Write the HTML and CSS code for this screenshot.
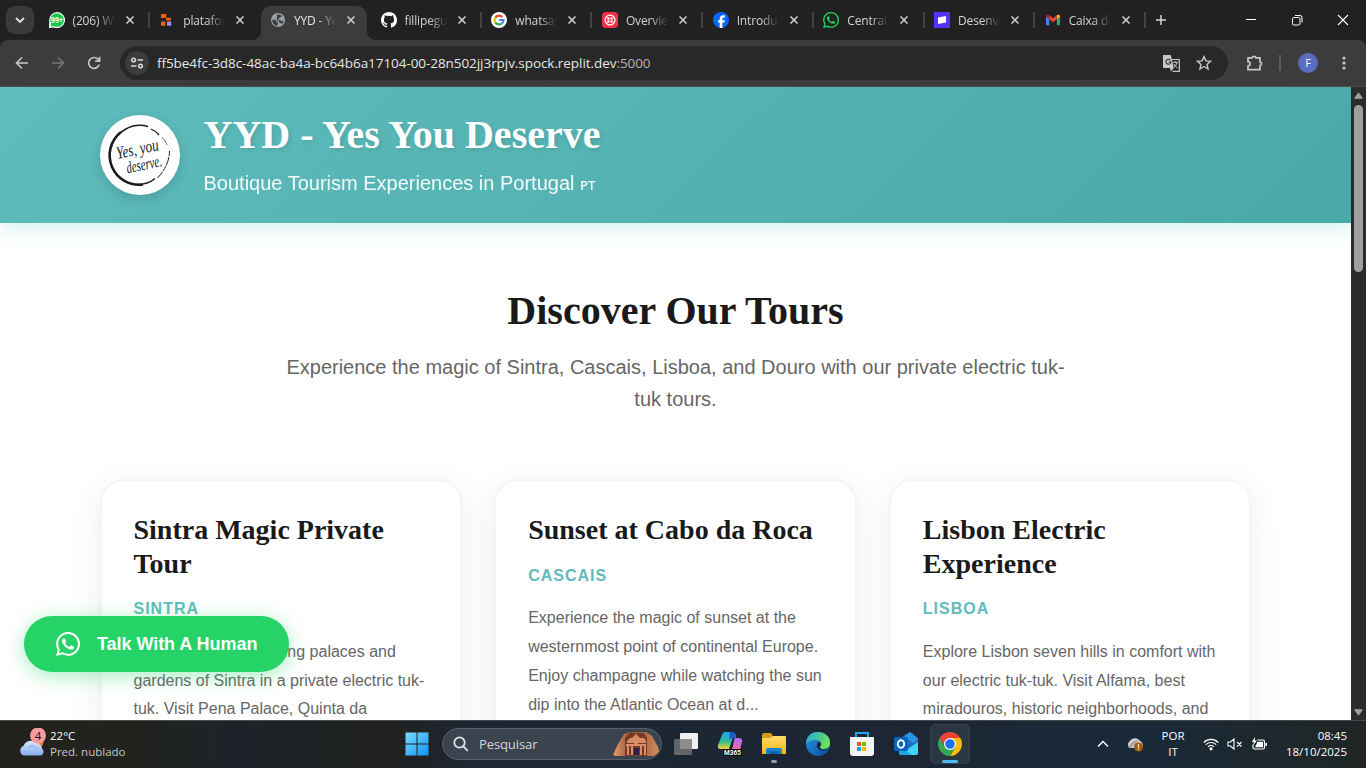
FILE: index.html
```html
<!DOCTYPE html>
<html lang="en">
<head>
<meta charset="utf-8">
<title>YYD - Yes You Deserve</title>
<link rel="stylesheet" href="styles.css">
</head>
<body>
<svg class="defs" width="0" height="0">
  <defs>
    <linearGradient id="win" x1="0" y1="0" x2="1" y2="1"><stop offset="0" stop-color="#7ddcff"/><stop offset="1" stop-color="#0a94f5"/></linearGradient>
    <linearGradient id="cloud" x1="0" y1="0" x2="0" y2="1"><stop offset="0" stop-color="#dfeaff"/><stop offset="1" stop-color="#82abed"/></linearGradient>
    <linearGradient id="folder" x1="0" y1="0" x2="0" y2="1"><stop offset="0" stop-color="#ffdc69"/><stop offset="1" stop-color="#f5b31c"/></linearGradient>
    <linearGradient id="edgeA" x1="0" y1="0" x2="1" y2=".4"><stop offset="0" stop-color="#1ba7e5"/><stop offset="1" stop-color="#6ee05a"/></linearGradient>
    <linearGradient id="edgeB" x1="0" y1="0" x2="1" y2="1"><stop offset="0" stop-color="#209be0"/><stop offset="1" stop-color="#0b4a9c"/></linearGradient>
    <linearGradient id="m1" x1="0" y1="0" x2="0" y2="1"><stop offset="0" stop-color="#19a5f7"/><stop offset=".6" stop-color="#38bd8a"/><stop offset="1" stop-color="#ffd52c"/></linearGradient>
    <linearGradient id="m2" x1="0" y1="0" x2="0" y2="1"><stop offset="0" stop-color="#a86bff"/><stop offset="1" stop-color="#ff6494"/></linearGradient>
    <linearGradient id="rock" x1="0" y1="0" x2="1" y2="0"><stop offset="0" stop-color="#e8a06f"/><stop offset=".4" stop-color="#8f4e2d"/><stop offset="1" stop-color="#d18b5c"/></linearGradient>
    <symbol id="x" viewBox="0 0 8 8"><path d="M.5.5l7 7M7.5.5l-7 7" stroke="#d2d4d2" stroke-width="1.500"/></symbol>
    <symbol id="wa" viewBox="0 0 24 24"><path fill="currentColor" d="M17.472 14.382c-.297-.149-1.758-.867-2.03-.967-.273-.099-.471-.148-.67.15-.197.297-.767.966-.94 1.164-.173.199-.347.223-.644.075-.297-.15-1.255-.463-2.39-1.475-.883-.788-1.48-1.761-1.653-2.059-.173-.297-.018-.458.13-.606.134-.133.298-.347.446-.52.149-.174.198-.298.298-.497.099-.198.05-.371-.025-.52-.075-.149-.669-1.612-.916-2.207-.242-.579-.487-.5-.669-.51-.173-.008-.371-.01-.57-.01-.198 0-.52.074-.792.372-.272.297-1.04 1.016-1.04 2.479 0 1.462 1.065 2.875 1.213 3.074.149.198 2.096 3.2 5.077 4.487.709.306 1.262.489 1.694.625.712.227 1.36.195 1.871.118.571-.085 1.758-.719 2.006-1.413.248-.694.248-1.289.173-1.413-.074-.124-.272-.198-.57-.347m-5.421 7.403h-.004a9.87 9.87 0 01-5.031-1.378l-.361-.214-3.741.982.998-3.648-.235-.374a9.86 9.86 0 01-1.51-5.26c.001-5.45 4.436-9.884 9.888-9.884 2.64 0 5.122 1.03 6.988 2.898a9.825 9.825 0 012.893 6.994c-.003 5.45-4.437 9.884-9.885 9.884m8.413-18.297A11.815 11.815 0 0012.05 0C5.495 0 .16 5.335.157 11.892c0 2.096.547 4.142 1.588 5.945L.057 24l6.305-1.654a11.882 11.882 0 005.683 1.448h.005c6.554 0 11.89-5.335 11.893-11.893a11.821 11.821 0 00-3.48-8.413z"/></symbol>
  </defs>
</svg>
<div class="screen">
  <div class="tabstrip">
    <div class="tabsearch"><svg width="10" height="6" viewBox="0 0 10 6"><path d="M1 1l4 4 4-4" fill="none" stroke="#e3e3e3" stroke-width="1.8"/></svg></div>
    <div class="tabs">
      <div class="tab sep"><svg class="fav" viewBox="0 0 16 16"><path fill="#fff" d="M8 0a8 8 0 1 1-3 15.400L0 16l.2-5.500V8A8 8 0 0 1 8 0z"/><path fill="#12c648" d="M8 1.200A6.800 6.800 0 1 1 4.800 14L1.600 14.500 2 11A6.800 6.800 0 0 1 8 1.200z"/><text x="8.100" y="11" text-anchor="middle" font-family="Open Sans" font-weight="700" font-size="8" textLength="12" lengthAdjust="spacingAndGlyphs" fill="#fff">99+</text></svg><span class="name">(206) Wh</span><svg class="close"><use href="#x"/></svg></div>
      <div class="tab"><svg class="fav" viewBox="0 0 16 16"><rect x="2" y="2" width="5.200" height="4" rx=".6" fill="#f65f0a"/><rect x="7" y="5.800" width="5" height="2.600" rx=".5" fill="#f65f0a"/><rect x="2" y="9.600" width="4.400" height="4.200" rx=".6" fill="#f65f0a"/><rect x="8" y="9.600" width="4.200" height="4.200" rx=".6" fill="#a48afb"/></svg><span class="name">plataform</span><svg class="close"><use href="#x"/></svg></div>
      <div class="tab active"><svg class="fav" viewBox="0 0 16 16"><circle cx="8" cy="8" r="7" fill="#9aa0a6"/><path d="M2.300 7.800c2.200-.2 3.700.2 4 1.400.2 1.100 1.500.8 1.700 1.800.2.800-.8 1-.8 3-3-.5-5-3.200-4.900-6.200zM7.100 2.500c2-.4 3.600.3 4.600 1.300.2 1-.7 1.300-1.600 1.400-.7.2-.3 1.400-1.500 1.400-.9 0-.9 1.200.2 1.300 1.500 0 2 .8 3 1h1.600c-.1 1.300-.7 2.400-1.500 3.200-.6-1.600-2.300-.9-2.600-2.200-.2-1-1.700-.6-2.300-1.800-.5-1 .2-2.300 0-3.200-.1-.8-.6-1.200.1-2.400z" fill="#3c3c3c"/></svg><span class="name">YYD - Yes</span><svg class="close"><use href="#x"/></svg></div>
      <div class="tab sep"><svg class="fav" viewBox="0 0 16 16"><path fill="#fff" d="M8 0C3.58 0 0 3.58 0 8c0 3.54 2.29 6.53 5.47 7.59.4.07.55-.17.55-.38 0-.19-.01-.82-.01-1.49-2.01.37-2.53-.49-2.69-.94-.09-.23-.48-.94-.82-1.13-.28-.15-.68-.52-.01-.53.63-.01 1.08.58 1.23.82.72 1.21 1.87.87 2.33.66.07-.52.28-.87.51-1.07-1.78-.2-3.64-.89-3.64-3.95 0-.87.31-1.59.82-2.15-.08-.2-.36-1.02.08-2.12 0 0 .67-.21 2.2.82a7.6 7.6 0 0 1 4 0c1.53-1.04 2.2-.82 2.2-.82.44 1.1.16 1.92.08 2.12.51.56.82 1.27.82 2.15 0 3.07-1.87 3.75-3.65 3.95.29.25.54.73.54 1.48 0 1.07-.01 1.93-.01 2.2 0 .21.15.46.55.38A8.01 8.01 0 0 0 16 8c0-4.42-3.58-8-8-8z"/></svg><span class="name">fillipegui</span><svg class="close"><use href="#x"/></svg></div>
      <div class="tab sep"><svg class="fav" viewBox="0 0 16 16"><circle cx="8" cy="8" r="8" fill="#fff"/><g fill="none" stroke-width="2.200"><path d="M4.300 5.600A4.400 4.400 0 0 1 11.200 5" stroke="#ea4335"/><path d="M4.300 10.400a4.500 4.500 0 0 1 0-4.800" stroke="#fbbc05"/><path d="M11 11.200a4.400 4.400 0 0 1-6.700-.8" stroke="#34a853"/><path d="M8.200 8h4.300a4.400 4.400 0 0 1-1.500 3.400" stroke="#4285f4"/></g></svg><span class="name">whatsapp</span><svg class="close"><use href="#x"/></svg></div>
      <div class="tab sep"><svg class="fav" viewBox="0 0 16 16"><rect width="16" height="16" rx="4" fill="#f22f46"/><circle cx="8" cy="8" r="4.900" fill="none" stroke="#fff" stroke-width="1.300"/><g fill="#fff"><circle cx="6.400" cy="6.400" r="1.250"/><circle cx="9.600" cy="6.400" r="1.250"/><circle cx="6.400" cy="9.600" r="1.250"/><circle cx="9.600" cy="9.600" r="1.250"/></g></svg><span class="name">Overview</span><svg class="close"><use href="#x"/></svg></div>
      <div class="tab sep"><svg class="fav" viewBox="0 0 16 16"><circle cx="8" cy="8" r="8" fill="#0866ff"/><path fill="#fff" d="M6.700 16v-5.400H5V8.200h1.700V7.100c0-2.600 1.200-3.800 3.700-3.800.5 0 1.300.1 1.600.2v2.100c-.2 0-.5 0-.9 0-1.200 0-1.700.5-1.700 1.700v.9h2.400l-.4 2.400H9.400V16z"/></svg><span class="name">Introduct</span><svg class="close"><use href="#x"/></svg></div>
      <div class="tab sep"><svg class="fav green"><use href="#wa"/></svg><span class="name">Central d</span><svg class="close"><use href="#x"/></svg></div>
      <div class="tab sep"><svg class="fav" viewBox="0 0 16 16"><rect width="16" height="16" fill="#5035ff"/><path d="M4 5.500l8-1.500v6.500L4 12z" fill="#fff"/></svg><span class="name">Desenvol</span><svg class="close"><use href="#x"/></svg></div>
      <div class="tab sep"><svg class="fav" viewBox="0 0 16 16"><path d="M1 4.500l3.200 2.400v6.300H2a1 1 0 0 1-1-1z" fill="#4285f4"/><path d="M11.800 6.900L15 4.500v7.700a1 1 0 0 1-1 1h-2.200z" fill="#34a853"/><path d="M11.800 3.300l.8-.4c1.200-.6 2.400.2 2.400 1.300v.6l-3.200 2.500z" fill="#fbbc04"/><path d="M4.200 3.300L8 6.200l3.800-2.900v4L8 10.200 4.200 7.300z" fill="#ea4335"/><path d="M1 4.800v-.6c0-1.100 1.200-1.900 2.400-1.300l.8.4v4z" fill="#c5221f"/></svg><span class="name">Caixa de</span><svg class="close"><use href="#x"/></svg></div>
    </div>
    <svg class="plus" width="12" height="12" viewBox="0 0 12 12"><path d="M6 1v10M1 6h10" stroke="#d5d7d5" stroke-width="1.500"/></svg>
    <div class="wincontrols">
      <svg width="12" height="12" viewBox="0 0 12 12"><path d="M1 5.500h10" stroke="#fff"/></svg>
      <svg width="12" height="12" viewBox="0 0 12 12" fill="none" stroke="#fff"><rect x="1.500" y="3.500" width="7.500" height="7.500" rx="1.300"/><path d="M4 1.500h5a2 2 0 0 1 2 2v5"/></svg>
      <svg width="12" height="12" viewBox="0 0 12 12"><path d="M1 1l10 10M11 1L1 11" stroke="#fff" stroke-width="1.100"/></svg>
    </div>
  </div>
  <div class="toolbar">
    <div class="nav">
      <svg width="16" height="16" viewBox="0 0 16 16" fill="none" stroke="#c7c7c7" stroke-width="1.600"><path d="M14 8H3M8 2.500L2.500 8 8 13.500"/></svg>
      <svg width="16" height="16" viewBox="0 0 16 16" fill="none" stroke="#777" stroke-width="1.600"><path d="M2 8h11M8 2.500L13.500 8 8 13.500"/></svg>
      <svg width="16" height="16" viewBox="0 0 16 16" fill="none" stroke="#c7c7c7" stroke-width="1.700"><path d="M13.200 9.500A5.400 5.400 0 1 1 12 4.200l1.500 1.700"/><path d="M13.600 1.800v4.400H9.200"/></svg>
    </div>
    <div class="omnibox">
      <div class="site"><svg width="14" height="14" viewBox="0 0 14 14" fill="none" stroke="#d8d8d8" stroke-width="1.500"><circle cx="3.600" cy="4" r="1.800"/><path d="M7.500 4H13M1 10h5.500"/><circle cx="10.500" cy="10" r="1.800"/></svg></div>
      <span class="url">ff5be4fc-3d8c-48ac-ba4a-bc64b6a17104-00-28n502jj3rpjv.spock.replit.dev<i>:5000</i></span>
      <svg class="translate" width="17" height="17" viewBox="0 0 17 17"><path d="M6 4.500h10.300v11.800H9.500" fill="none" stroke="#c7c7c7" stroke-width="1.200"/><path d="M0 0h7.800l3 13H1a1 1 0 0 1-1-1z" fill="#c7c7c7"/><path d="M7.400 5.200A2.500 2.500 0 1 0 7.900 7H5.600" fill="none" stroke="#282828" stroke-width="1.100"/><path d="M9.500 7.300h5.500M12.200 6v1.300M14 7.500c-.5 2.500-2 4-3.500 5M11 9c.8 1.800 2 3 3.500 4" fill="none" stroke="#c7c7c7"/><path d="M7.800 16.500l3-3.500H7z" fill="#c7c7c7"/></svg>
      <svg width="16" height="16" viewBox="0 0 16 16"><path d="M8 1.600l1.900 4.300 4.700.4-3.600 3.100 1.100 4.600L8 11.500 3.900 14 5 9.400 1.400 6.300l4.700-.4z" fill="none" stroke="#c7c7c7" stroke-width="1.400"/></svg>
    </div>
    <svg class="ext" width="18" height="18" viewBox="0 0 18 18"><path d="M2 3.800h4.200a1.900 1.900 0 0 1 3.700 0H14v4.100a1.900 1.900 0 0 1 0 3.700v4.100H2v-3.900a2 2 0 0 0 0-4.100z" fill="none" stroke="#c7c7c7" stroke-width="1.700" stroke-linejoin="round"/></svg>
    <div class="divider"></div>
    <div class="avatar">F</div>
    <svg class="dots" width="4" height="14" viewBox="0 0 4 14" fill="#c7c7c7"><circle cx="2" cy="2" r="1.600"/><circle cx="2" cy="7" r="1.600"/><circle cx="2" cy="12" r="1.600"/></svg>
  </div>
  <div class="viewport">
    <div class="page">
      <header class="hero">
        <div class="logo"><svg width="80" height="80" viewBox="0 0 80 80"><g fill="none" stroke="#1d1b1c"><path d="M48 11.500A30 30 0 0 0 11 33" stroke-width="1.500"/><path d="M21 17A29.500 29.500 0 0 0 43 69.500" stroke-width="2.600"/><path d="M37 69.500q11 0 18-6" stroke-width="1.600"/><path d="M51 14q5 2 8 6" stroke-width="1.300"/><path d="M62 22q4 4 5 8" stroke-width=".6"/><path d="M69.500 36q0 14-12 27" stroke-width="1" stroke-dasharray="5 1 9 1"/></g><g font-family="Liberation Serif" font-style="italic" fill="#222"><text transform="translate(17.500 44) rotate(-12)" font-size="17.500" textLength="43" lengthAdjust="spacingAndGlyphs">Yes, you</text><text transform="translate(27.500 58.500) rotate(-12)" font-size="16.500" textLength="36" lengthAdjust="spacingAndGlyphs">deserve.</text></g></svg></div>
        <div class="brand"><h1>YYD - Yes You Deserve</h1><p>Boutique Tourism Experiences in Portugal <small>PT</small></p></div>
      </header>
      <main>
        <h2>Discover Our Tours</h2>
        <p class="lead">Experience the magic of Sintra, Cascais, Lisboa, and Douro with our private electric tuk-<br>tuk tours.</p>
        <div class="cards">
          <article class="card"><h3>Sintra Magic Private Tour</h3><div class="place">SINTRA</div><p>Discover the enchanting palaces and<br>gardens of Sintra in a private electric tuk-<br>tuk. Visit Pena Palace, Quinta da</p></article>
          <article class="card"><h3>Sunset at Cabo da Roca</h3><div class="place">CASCAIS</div><p>Experience the magic of sunset at the<br>westernmost point of continental Europe.<br>Enjoy champagne while watching the sun<br>dip into the Atlantic Ocean at d...</p></article>
          <article class="card"><h3>Lisbon Electric Experience</h3><div class="place">LISBOA</div><p>Explore Lisbon seven hills in comfort with<br>our electric tuk-tuk. Visit Alfama, best<br>miradouros, historic neighborhoods, and</p></article>
        </div>
      </main>
      <a class="chat"><svg width="24" height="24"><use href="#wa"/></svg><span>Talk With A Human</span></a>
    </div>
    <div class="scrollbar"><svg width="9" height="7" viewBox="0 0 9 7"><path d="M4.500 .8L8.300 6.300H.7z" fill="#9f9f9f" stroke="#9f9f9f" stroke-linejoin="round"/></svg><div class="thumb"></div><svg width="9" height="7" viewBox="0 0 9 7"><path d="M4.500 6.200L8.300 .7H.7z" fill="#9f9f9f" stroke="#9f9f9f" stroke-linejoin="round"/></svg></div>
  </div>
  <div class="taskbar">
    <div class="weather">
      <svg width="30" height="32" viewBox="0 0 30 32"><circle cx="19" cy="14" r="5.500" fill="#ef7a1a"/><path d="M5 27.500a5 5 0 0 1-.5-9.500 7.500 7.500 0 0 1 12.500-3 5.500 5.500 0 0 1 6 5.500 4 4 0 0 1-1 7z" fill="url(#cloud)"/><path d="M9 20q4-5 9 1" fill="none" stroke="#7b9fe0"/><circle cx="19" cy="7.500" r="8" fill="#fb99a3"/><text x="19" y="11.700" text-anchor="middle" font-family="Open Sans" font-size="11.500" fill="#111">4</text></svg>
      <div class="wtext"><b>22°C</b><span>Pred. nublado</span></div>
    </div>
    <div class="apps">
      <svg class="start" width="24" height="24" viewBox="0 0 24 24" fill="url(#win)"><path d="M1 .5h10.500v11H.5V1zM12.500 .5h11v11h-11zM.5 12.500h11v11h-11zM12.500 12.500h11v11h-11z"/></svg>
      <div class="search">
        <svg width="16" height="16" viewBox="0 0 16 16" fill="none" stroke="#e2e5e8" stroke-width="1.800"><circle cx="6.500" cy="6.500" r="5.200"/><path d="M10.300 10.300l4.500 4.500"/></svg>
        <span>Pesquisar</span>
        <svg class="petra" width="48" height="26" viewBox="0 0 48 26"><path d="M1 24l4-9L12 3l6-2h16l6 4 6 11 1 5-5 4H4z" fill="url(#rock)"/><path d="M13 25V7l5-5h14l3 5v18z" fill="#733b25"/><path d="M15 10l3-3h2l4-4 4 4h4l2 3v2H15zM14 13h20v2H14zM15 15h2v9h-2zM19 15h2v9h-2zM28 15h2v9h-2zM32 15h2v9h-2zM22 6h4v7h-4z" fill="#d98d66"/><rect x="22" y="17" width="5" height="7" fill="#27204b"/></svg>
      </div>
      <svg class="app" viewBox="0 0 26 26"><rect x="7" y="2" width="18" height="16" rx="1" fill="#efefef"/><rect x="1" y="8" width="18" height="16" rx="1" fill="#747474" fill-opacity=".8"/></svg>
      <svg class="app" viewBox="0 0 26 26"><path d="M8 1h8q2 0 3 5h-3l-4 12H3q-3-1-2-4l4-10q1-3 3-3z" fill="url(#m1)"/><path d="M13 1h3q2 0 3 6h-4q-2 0-3 2z" fill="#2157cf"/><path d="M18 7h5q3 1 2 4l-2 8h-8l2-9q0-2 1-3z" fill="url(#m2)"/><rect x="6" y="18" width="19" height="7" fill="#080808"/><text x="7" y="24" font-family="Roboto" font-weight="700" font-size="6.500" textLength="17" fill="#fff">M365</text></svg>
      <svg class="app" viewBox="0 0 26 26"><path d="M1 4q0-2 2-2h7l2 3h11q2 0 2 2v16H1z" fill="#dc9914"/><path d="M1 7h8l3-2h12q1 0 1 1v17H1z" fill="url(#folder)"/><path d="M5 23v-4q0-2 2-2h12q2 0 2 2v4z" fill="#1683cc"/><path d="M8 20h10v3H8z" fill="#0968ad"/></svg>
      <svg class="app" viewBox="0 0 26 26"><circle cx="13" cy="13" r="12" fill="url(#edgeB)"/><path d="M1 12C2 4 7 1 13 1c8 0 13 6 12 12 0 4-4 5-8 5-3-1-3-2-1-4 1-5-6-8-15-2z" fill="url(#edgeA)"/><path d="M16 14q-2 2 0 4 4 2 8-1-4 4-9 2-5-3-2-8 4 0 3 3z" fill="#1b2633"/></svg>
      <svg class="app" viewBox="0 0 26 26"><path d="M7 8V2h12v6" fill="none" stroke="#20a9e8" stroke-width="2"/><path d="M1 6h24v16q0 3-3 3H4q-3 0-3-3z" fill="#f3f3f3"/><path d="M8 11h4v4H8z" fill="#f25022"/><path d="M13 11h4v4h-4z" fill="#7fba00"/><path d="M8 16h4v4H8z" fill="#00a4ef"/><path d="M13 16h4v4h-4z" fill="#ffb900"/></svg>
      <svg class="app" viewBox="0 0 26 26"><path d="M6 8L17 1l8 6v15q0 2-2 2H8q-2 0-2-2z" fill="#1870c8"/><path d="M11 5l9 7 5-4-8-7z" fill="#2698df"/><path d="M6 24L25 11v11q0 2-2 2z" fill="#40d5f1"/><path d="M6 15l13 9H8q-2 0-2-2z" fill="#20a6e5"/><rect x="1" y="6" width="14" height="14" rx="1.500" fill="#0b63bb"/><ellipse cx="8" cy="13" rx="3.200" ry="3.800" fill="none" stroke="#fff" stroke-width="1.900"/></svg>
      <div class="current"><svg width="24" height="24" viewBox="0 0 24 24"><path d="M12 6h10.390A12 12 0 0 1 12 24l5.200-9z" fill="#fbbc05"/><path d="M1.610 6l5.200 9L12 12V6h10.390A12 12 0 0 0 1.610 6z" fill="#ea4335"/><path d="M1.610 6A12 12 0 0 0 12 24l5.200-9H6.800z" fill="#34a853"/><circle cx="12" cy="12" r="6" fill="#fff"/><circle cx="12" cy="12" r="4.800" fill="#1a73e8"/></svg></div>
    </div>
    <div class="tray">
      <svg width="12" height="8" viewBox="0 0 12 8"><path d="M1 6.500l5-5 5 5" fill="none" stroke="#fff" stroke-width="1.400"/></svg>
      <svg class="onedrive" width="18" height="16" viewBox="0 0 18 16"><path d="M4 12a4 4 0 0 1 0-7 6 6 0 0 1 10 0 4 4 0 0 1 1 7z" fill="#d3d3d3"/><path d="M2 11q5-8 11-7L5 12z" fill="#a7a7a7"/><circle cx="12.500" cy="11" r="4.500" fill="#a75d00"/><path d="M12.500 8.300v3.500M12.500 12.600v1.200" stroke="#fff" stroke-width="1.100"/></svg>
      <div class="lang"><span>POR</span><span>IT</span></div>
      <svg class="wifi" width="16" height="14" viewBox="0 0 16 14" fill="none" stroke="#fff" stroke-width="1.200"><path d="M.8 5.500a10 10 0 0 1 14.400 0M2.800 7.700a7.300 7.300 0 0 1 10.400 0M5 9.800a4.400 4.400 0 0 1 6 0"/><circle cx="8" cy="11.800" r="1" fill="#fff"/></svg>
      <svg class="vol" width="16" height="14" viewBox="0 0 16 14" fill="none" stroke="#fff" stroke-width="1.100"><path d="M1 5h2.500L7 2v10L3.500 9H1zM10 5l4.500 4.500M14.500 5L10 9.500"/></svg>
      <svg class="bat" width="17" height="14" viewBox="0 0 17 14"><path d="M6.500 3H12q1.500 0 1.500 1.500v6q0 1.500-1.500 1.500H3.500Q2 12 2 10.500V7.500" fill="none" stroke="#fff" stroke-width="1.200"/><path d="M6.500 4.700H12v5.600H4z" fill="#fff"/><path d="M14.500 6h1.500v3h-1.500z" fill="#fff"/><path d="M4.200 0L.8 5H3l-1 3.500 4-5H3.800z" fill="#fff"/></svg>
      <div class="clock"><span>08:45</span><span>18/10/2025</span></div>
    </div>
  </div>
</div>
</body>
</html>
```

FILE: styles.css
```css
* { box-sizing: border-box; }
body { margin: 0; overflow: hidden; font-family: "Liberation Sans", Arial, sans-serif; }
h1, h2, h3, p { margin: 0; }
svg { display: block; flex: none; }
.defs { position: absolute; }
.screen { width: 1366px; height: 768px; display: flex; flex-direction: column; overflow: hidden; background: #202120; }
.tabstrip, .toolbar, .taskbar { font-family: "Open Sans", "Noto Sans", sans-serif; }

.tabstrip { height: 40px; flex: none; display: flex; align-items: center; background: #202120; padding-left: 6px; }
.tabsearch { width: 28px; height: 28px; border-radius: 9px; background: #3a3a3a; display: flex; align-items: center; justify-content: center; }
.tabs { display: flex; margin-left: 4px; width: 1107px; height: 40px; flex: none; }
.tab { width: 110.7px; height: 40px; display: flex; align-items: center; padding-left: 10.5px; flex: none; position: relative; }
.tab.sep::after { content: ""; position: absolute; right: -1px; top: 12px; width: 2px; height: 16px; background: #424442; }
.tab.active::before { content: ""; position: absolute; left: 2px; right: 3px; top: 6px; bottom: 0; border-radius: 10px 10px 0 0; background: #3c3c3c; }
.tab.active::after { content: ""; position: absolute; left: -6px; right: -5px; bottom: 0; height: 8px; background: radial-gradient(circle at 0 0, transparent 7.5px, #3c3c3c 8px) 0 0 / 8px 8px no-repeat, radial-gradient(circle at 100% 0, transparent 7.5px, #3c3c3c 8px) 100% 0 / 8px 8px no-repeat; }
.tab.active > * { position: relative; }
.tab.active .name { color: #e6e6e6; }
.fav { width: 16px; height: 16px; }
.green { color: #25d366; }
.name { width: 42px; margin-left: 8px; overflow: hidden; white-space: nowrap; font-size: 12px; line-height: 18px; padding-top: 1px; letter-spacing: -.15px; color: #d2d4d2; -webkit-mask-image: linear-gradient(90deg, #000 58%, transparent 100%); mask-image: linear-gradient(90deg, #000 58%, transparent 100%); }
.close { width: 8px; height: 8px; margin-left: 11px; }
.plus { margin-left: 10px; }
.wincontrols { display: flex; gap: 34px; margin-left: auto; padding-right: 17px; }

.toolbar { height: 47px; flex: none; display: flex; align-items: center; background: #3c3c3c; border-bottom: 1px solid #4c4c4c; border-radius: 8px 8px 0 0; }
.nav { display: flex; gap: 20px; width: 120px; padding-left: 14px; }
.omnibox { width: 1108px; height: 34px; border-radius: 17px; background: #282828; display: flex; align-items: center; padding: 0 16px 0 5px; }
.site { width: 24px; height: 24px; border-radius: 12px; background: #3c3c3c; display: flex; align-items: center; justify-content: center; }
.url { margin-left: 8px; color: #e6e6e6; font-size: 13.500px; line-height: 20px; letter-spacing: -.06px; white-space: nowrap; }
.url i { font-style: normal; color: #b5b5b5; }
.translate { margin-left: auto; margin-right: 16px; }
.ext { margin-left: 18px; }
.divider { width: 2px; height: 16px; margin-left: 15px; background: #5d5d5d; }
.avatar { width: 20px; height: 20px; margin-left: 17px; border-radius: 10px; background: #5c6bc0; color: #fff; font-size: 11px; line-height: 20px; text-align: center; }
.dots { margin-left: 24px; }

.viewport { flex: 1; min-height: 0; display: flex; }
.page { width: 1351px; overflow: hidden; position: relative; background: #fff; }
.hero { height: 136px; padding: 0 99.5px; display: flex; align-items: center; background: linear-gradient(135deg, #5fbcbc, #49a8a8); box-shadow: 0 4px 20px rgba(78, 205, 196, .3); }
.logo { width: 80px; height: 80px; border-radius: 50%; background: #fff; box-shadow: 0 4px 12px rgba(0, 0, 0, .15); }
.brand { margin-left: 24px; color: #fff; }
.brand h1 { font: 700 40px/48px "Liberation Serif", serif; text-shadow: 2px 2px 4px rgba(0, 0, 0, .1); white-space: nowrap; }
.brand p { margin-top: 8px; font-size: 20px; line-height: 32px; opacity: .92; }
.brand small { font: 600 13px/1 "Open Sans", sans-serif; }
main { padding: 64px 99.5px 0; }
main h2 { font: 700 40px/48px "Liberation Serif", serif; text-align: center; color: #1a1a1a; }
.lead { margin-top: 16px; text-align: center; font-size: 20px; line-height: 32px; color: #666; }
.cards { margin-top: 64px; display: grid; grid-template-columns: repeat(3, 1fr); gap: 32px; }
.card { height: 400px; border: 2px solid #f5f5f5; background: #fff; border-radius: 24px; padding: 32px; box-shadow: 0 8px 32px rgba(0, 0, 0, .08); }
.card h3 { font: 700 28px/33.6px "Liberation Serif", serif; color: #1a1a1a; }
.place { margin-top: 16px; font-size: 16px; font-weight: 700; line-height: 25.6px; letter-spacing: 1px; color: #5fbcbc; }
.card p { margin-top: 16px; font-size: 16px; line-height: 28.800px; color: #666; white-space: nowrap; }
.chat { position: absolute; left: 24px; top: 529px; width: 265px; height: 56px; border-radius: 28px; padding-left: 32px; display: flex; align-items: center; gap: 17px; background: #25d366; color: #fff; font-size: 18px; font-weight: 700; letter-spacing: -.05px; white-space: nowrap; box-shadow: 0 4px 20px rgba(37, 211, 102, .4); }
.scrollbar { width: 15px; background: #2b2b2b; display: flex; flex-direction: column; align-items: center; padding: 5px 0 4px; }
.scrollbar .thumb { width: 9px; height: 167px; margin-top: 6px; margin-bottom: auto; border-radius: 5px; background: #9f9f9f; }

.taskbar { height: 48px; flex: none; display: flex; align-items: center; position: relative; padding-bottom: 1px; border-top: 1px solid #454b4b; background: linear-gradient(90deg, #24221d 0, #22231f 130px, #1d2429 230px, #20211f 390px, #1d2632 470px, #1c2634 900px, #1a2938 1150px, #202625 1366px); color: #fff; }
.weather { display: flex; width: 405px; padding-left: 19px; }
.wtext { margin-left: 1px; display: flex; flex-direction: column; font-size: 11.500px; line-height: 16px; }
.wtext b { font-weight: 400; }
.wtext span { color: #c6c6c5; }
.apps { display: flex; align-items: center; }
.search { width: 220px; height: 32px; margin: 0 11px 0 13px; border: 1px solid #56606b; border-radius: 16px; background: #3b434e; display: flex; align-items: center; padding-left: 10px; }
.search span { margin-left: 10px; font-size: 13px; letter-spacing: -.1px; color: #d4d7da; }
.petra { margin-left: auto; margin-right: 1px; }
.app { width: 26px; height: 26px; margin-right: 18px; }
.current { width: 40px; height: 40px; margin-left: -7px; border-radius: 5px; background: #2a3642; border: 1px solid #35414c; display: flex; align-items: center; justify-content: center; position: relative; }
.current::after { content: ""; position: absolute; bottom: 0; left: 11px; width: 16px; height: 3px; border-radius: 2px; background: #52baf2; }
.taskbar::after { content: ""; position: absolute; left: 771px; top: 39px; width: 6px; height: 3px; border-radius: 2px; background: #9a9da0; }
.tray { display: flex; align-items: center; margin-left: auto; padding-right: 19px; }
.onedrive { margin-left: 17px; }
.lang, .clock { display: flex; flex-direction: column; font-size: 11.500px; line-height: 16px; }
.lang { width: 24px; margin-left: 17px; align-items: center; }
.wifi { margin-left: 18px; }
.vol { margin-left: 8px; }
.bat { margin-left: 8px; }
.clock { width: 64px; margin-left: 15px; align-items: flex-end; white-space: nowrap; }
```
